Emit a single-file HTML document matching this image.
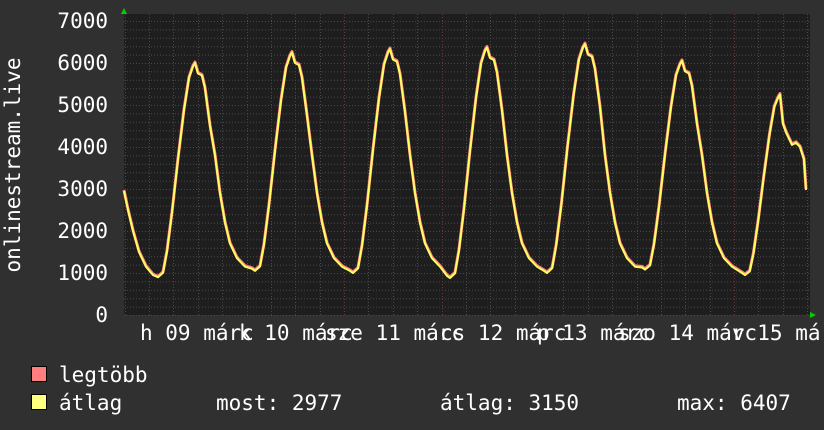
<!DOCTYPE html>
<html><head><meta charset="utf-8"><style>
html,body{margin:0;padding:0;background:#303030;overflow:hidden}
svg{display:block}
text{font-family:"DejaVu Sans Mono","Liberation Mono",monospace;font-size:21px;fill:#fff}
</style></head><body>
<svg id="g" width="824" height="430" viewBox="0 0 824 430" xmlns="http://www.w3.org/2000/svg">
<rect width="824" height="430" fill="#303030"/>
<rect x="124" y="14" width="686" height="301" fill="#1e1e1e"/>
<g id="grid"></g>
<path id="mx" fill="none" stroke="#ff7f7f" stroke-width="3" stroke-linejoin="round"/>
<path id="av" fill="none" stroke="#ffff60" stroke-width="2" stroke-linejoin="round"/>
<polygon points="121,14 127,14 124,8" fill="#00d000"/>
<polygon points="810,312 810,318 816,315" fill="#00d000"/>
<g text-anchor="end">
<text x="108" y="28">7000</text><text x="108" y="70">6000</text><text x="108" y="112">5000</text>
<text x="108" y="154">4000</text><text x="108" y="196">3000</text><text x="108" y="238">2000</text>
<text x="108" y="280">1000</text><text x="108" y="322">0</text>
</g>
<text transform="translate(20,165) rotate(-90)" text-anchor="middle">onlinestream.live</text>
<g>
<text x="140" y="340">h 09 márc</text>
<text x="239" y="340">k 10 márc</text>
<text x="325" y="340">sze 11 márc</text>
<text x="440" y="340">cs 12 márc</text>
<text x="537" y="340">p 13 márc</text>
<text x="618" y="340">szo 14 márc</text>
<text x="732" y="340">v 15 márc</text>
</g>
<rect x="31.5" y="366.5" width="15" height="15" fill="#ff7f7f" stroke="#000"/>
<rect x="31.5" y="394.5" width="15" height="15" fill="#ffff7f" stroke="#000"/>
<text x="59" y="382">legtöbb</text>
<text x="59" y="410">átlag</text>
<text x="216" y="410">most: 2977</text>
<text x="440" y="410">átlag: 3150</text>
<text x="677" y="410">max: 6407</text>
</svg>
<script>
var ns="http://www.w3.org/2000/svg",G=document.getElementById('grid');
function ln(x1,y1,x2,y2,c){var l=document.createElementNS(ns,'line');l.setAttribute('x1',x1);l.setAttribute('y1',y1);l.setAttribute('x2',x2);l.setAttribute('y2',y2);l.setAttribute('stroke',c);l.setAttribute('stroke-width',1);l.setAttribute('stroke-dasharray','1,2');G.appendChild(l);}
for(var i=0;i<=35;i++){var y=315-i*8.4+0.5;ln(124,y,810,y,i%5==0?'#6a3a3a':'#4a4a4a');}
for(var x=149-97.5;x<810;x+=24.375){if(x<124)continue;var k=Math.round((x-149)/24.375);ln(Math.round(x)+0.5,14,Math.round(x)+0.5,315,k%4==0?'#6a3a3a':'#4a4a4a');}
var mins=[[158,900],[255,1050],[353,1000],[450,880],[547,1000],[645,1080],[745,950]];
var peaks=[[195,6000],[292,6250],[390,6330],[487,6370],[585,6450],[682,6050],[780,5250]];
var pts=[[124,2950],[128,2500],[133,2000],[139,1500],[146,1150],[153,950]];
var fr=[[5,0.02],[9,0.12],[14,0.3],[20,0.55],[26,0.78],[31,0.93]];
for(var d=0;d<7;d++){var m=mins[d][0],mv=mins[d][1],p=peaks[d][0],pv=peaks[d][1];
 if(d>0){var pp=peaks[d-1][0],ppv=peaks[d-1][1];
  pts.push([pp+3,ppv-250],[pp+7,ppv-300],[pp+10,ppv-600],[pp+15,ppv-1500],[pp+20,3800],[pp+25,2900],[pp+30,2200],[pp+35,1700],[pp+42,1350],[pp+50,1150],[m-3,mv+50]);}
 pts.push([m,mv]);
 fr.forEach(function(f){pts.push([m+f[0]*(p-m)/37,mv+(pv-mv)*f[1]]);});
 pts.push([p-2,pv-80],[p,pv]);}
var lx=peaks[6][0],lv=peaks[6][1];
pts.push([lx+3,lv-700],[lx+6,lv-900],[lx+12,lv-1200],[lx+16,4100],[lx+20,4000],[lx+24,3700],[806,2977]);
function toD(dy){return pts.map(function(q,i){return (i?'L':'M')+q[0].toFixed(1)+','+(315-q[1]*0.042+dy).toFixed(1)}).join(' ');}
document.getElementById('mx').setAttribute('d',toD(-1));
document.getElementById('av').setAttribute('d',toD(0));
</script>
</body></html>
